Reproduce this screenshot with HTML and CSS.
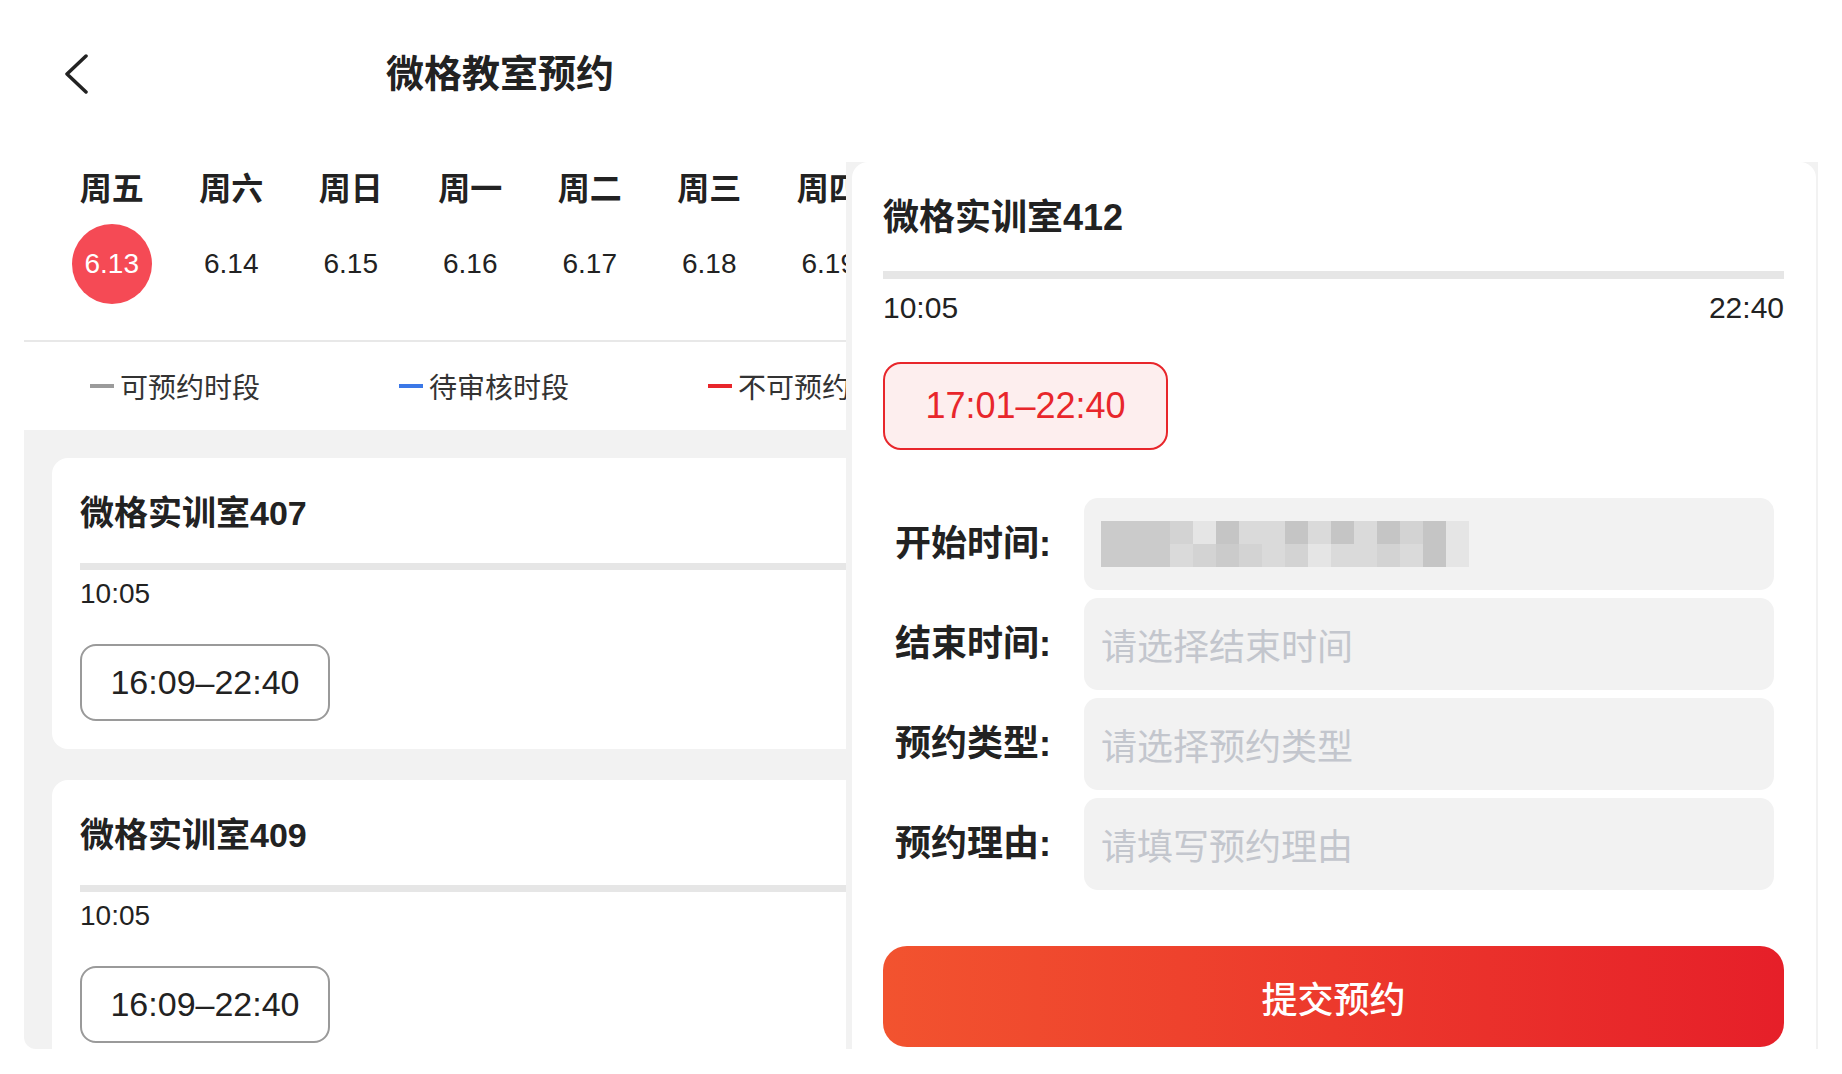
FILE: index.html
```html
<!DOCTYPE html>
<html lang="zh-CN">
<head>
    <meta charset="UTF-8">
    <meta name="viewport" content="width=device-width, initial-scale=1.0">
    <title>微格教室预约</title>
    <link rel="stylesheet" href="styles.css">
</head>
<body>
    <div class="screen">
        <!-- Página de fondo: lista de aulas -->
        <div class="page">
            <header class="nav">
                <a class="nav-back">
                    <svg viewBox="0 0 24 40"><polyline points="22,2 3,20 22,38" /></svg>
                </a>
                <h1 class="nav-title">微格教室预约</h1>
                <span></span>
            </header>

            <ul class="days">
                <li class="day active"><span class="day-week">周五</span><span class="day-date">6.13</span></li>
                <li class="day"><span class="day-week">周六</span><span class="day-date">6.14</span></li>
                <li class="day"><span class="day-week">周日</span><span class="day-date">6.15</span></li>
                <li class="day"><span class="day-week">周一</span><span class="day-date">6.16</span></li>
                <li class="day"><span class="day-week">周二</span><span class="day-date">6.17</span></li>
                <li class="day"><span class="day-week">周三</span><span class="day-date">6.18</span></li>
                <li class="day"><span class="day-week">周四</span><span class="day-date">6.19</span></li>
            </ul>

            <div class="legend">
                <span class="legend-item"><i class="legend-mark free"></i>可预约时段</span>
                <span class="legend-item"><i class="legend-mark pending"></i>待审核时段</span>
                <span class="legend-item"><i class="legend-mark busy"></i>不可预约时段</span>
            </div>

            <div class="rooms">
                <div class="room-card">
                    <div class="room-name">微格实训室407</div>
                    <div class="room-bar"></div>
                    <div class="room-times"><span>10:05</span><span>22:40</span></div>
                    <div class="slot">16:09–22:40</div>
                </div>
                <div class="room-card">
                    <div class="room-name">微格实训室409</div>
                    <div class="room-bar"></div>
                    <div class="room-times"><span>10:05</span><span>22:40</span></div>
                    <div class="slot">16:09–22:40</div>
                </div>
            </div>
        </div>

        <!-- Panel de reserva encima de la página -->
        <div class="sheet">
            <div class="sheet-body">
                <div class="sheet-title">微格实训室412</div>
                <div class="sheet-bar"></div>
                <div class="sheet-times"><span>10:05</span><span>22:40</span></div>
                <div class="slot-picked">17:01–22:40</div>

                <div class="form">
                    <div class="field">
                        <span class="field-label">开始时间:</span>
                        <div class="field-input">
                            <div class="mosaic">
                                <i class="m2"></i><i class="m2"></i><i class="m2"></i><i class="m3"></i><i class="m5"></i><i class="m1"></i><i class="m4"></i><i class="m4"></i>
                                <i class="m1"></i><i class="m4"></i><i class="m1"></i><i class="m4"></i><i class="m1"></i><i class="m3"></i><i class="m1"></i><i class="m5"></i>
                                <i class="m2"></i><i class="m2"></i><i class="m2"></i><i class="m4"></i><i class="m3"></i><i class="m2"></i><i class="m3"></i><i class="m4"></i>
                                <i class="m3"></i><i class="m5"></i><i class="m4"></i><i class="m4"></i><i class="m3"></i><i class="m4"></i><i class="m1"></i><i class="m5"></i>
                            </div>
                        </div>
                    </div>
                    <div class="field">
                        <span class="field-label">结束时间:</span>
                        <div class="field-input">请选择结束时间</div>
                    </div>
                    <div class="field">
                        <span class="field-label">预约类型:</span>
                        <div class="field-input">请选择预约类型</div>
                    </div>
                    <div class="field">
                        <span class="field-label">预约理由:</span>
                        <div class="field-input">请填写预约理由</div>
                    </div>
                </div>

                <button class="submit">提交预约</button>
            </div>
        </div>
    </div>
</body>
</html>
```

FILE: styles.css
```css
/* Estilos generales */
body {
    margin: 0;
    background: #fff;
    color: #222;
    font-family: "Liberation Sans", "Noto Sans CJK SC", sans-serif;
}

.screen {
    position: relative;
    width: 1842px;
    height: 1074px;
    overflow: hidden;
}

/* Página de fondo */
.page {
    width: 952px;
    margin-left: 24px;
}

.nav {
    display: grid;
    grid-template-columns: 1fr auto 1fr;
    align-items: center;
    height: 148px;
}

.nav-back {
    display: flex;
    padding-left: 40px;
}

.nav-back svg {
    width: 24px;
    height: 40px;
    fill: none;
    stroke: #222;
    stroke-width: 3.5;
    stroke-linecap: round;
    stroke-linejoin: round;
}

.nav-title {
    margin: 0;
    font-size: 38px;
    font-weight: 600;
    line-height: 48px;
}

/* Selector de días */
.days {
    list-style: none;
    margin: 0;
    padding: 21px 0 36px 28px;
    display: grid;
    grid-template-columns: repeat(7, 119.5px);
    border-bottom: 2px solid #e8e8e8;
}

.day {
    display: flex;
    flex-direction: column;
    align-items: center;
}

.day-week {
    font-size: 32px;
    font-weight: 600;
    line-height: 40px;
}

.day-date {
    margin-top: 15px;
    width: 80px;
    height: 80px;
    border-radius: 50%;
    font-size: 28px;
    line-height: 80px;
    text-align: center;
}

.day.active .day-date {
    background: #f54a55;
    color: #fff;
}

/* Leyenda */
.legend {
    display: flex;
    align-items: center;
    gap: 139px;
    height: 88px;
    padding-left: 66px;
    font-size: 28px;
    color: #333;
}

.legend-item {
    display: flex;
    align-items: center;
    gap: 6px;
    white-space: nowrap;
}

.legend-mark {
    width: 24px;
    height: 4px;
}

.legend-mark.free { background: #9b9b9b; }
.legend-mark.pending { background: #3b78e7; }
.legend-mark.busy { background: #e8262b; }

/* Tarjetas de aulas */
.rooms {
    box-sizing: border-box;
    height: 619px;
    overflow: hidden;
    padding: 28px 28px 0;
    background: #f2f2f2;
    border-bottom-left-radius: 12px;
    display: flex;
    flex-direction: column;
    gap: 31px;
}

.room-card {
    flex-shrink: 0;
    background: #fff;
    border-radius: 16px;
    padding: 35px 28px 28px;
}

.room-name {
    font-size: 34px;
    font-weight: 600;
    line-height: 40px;
}

.room-bar {
    height: 7px;
    margin-top: 30px;
    background: #e6e6e6;
}

.room-times {
    display: flex;
    justify-content: space-between;
    margin-top: 7px;
    font-size: 28px;
    line-height: 34px;
}

.slot {
    box-sizing: border-box;
    width: 250px;
    height: 77px;
    margin-top: 33px;
    border: 2px solid #9a9a9a;
    border-radius: 16px;
    display: flex;
    align-items: center;
    justify-content: center;
    font-size: 34px;
}

/* Panel de reserva */
.sheet {
    position: absolute;
    left: 846px;
    top: 162px;
    box-sizing: border-box;
    width: 972px;
    height: 887px;
    padding: 0 2px 0 6px;
    background: #f2f2f2;
}

.sheet-body {
    box-sizing: border-box;
    height: 100%;
    padding: 34px 32px 0 31px;
    background: #fff;
    border-radius: 16px 16px 0 0;
    display: flex;
    flex-direction: column;
}

.sheet-title {
    font-size: 36px;
    font-weight: 600;
    line-height: 44px;
}

.sheet-bar {
    height: 8px;
    margin-top: 31px;
    background: #e6e6e6;
}

.sheet-times {
    display: flex;
    justify-content: space-between;
    margin-top: 12px;
    font-size: 30px;
    line-height: 34px;
}

.slot-picked {
    box-sizing: border-box;
    align-self: flex-start;
    width: 285px;
    height: 88px;
    margin-top: 37px;
    border: 2px solid #e8262b;
    border-radius: 18px;
    background: #fdeeee;
    color: #e8262b;
    display: flex;
    align-items: center;
    justify-content: center;
    font-size: 36px;
    font-weight: 500;
}

/* Formulario */
.form {
    margin-top: 48px;
    padding: 0 10px 0 12px;
    display: flex;
    flex-direction: column;
    gap: 8px;
}

.field {
    display: grid;
    grid-template-columns: 189px 1fr;
    align-items: center;
}

.field-label {
    font-size: 36px;
    font-weight: 600;
    line-height: 44px;
}

.field-input {
    height: 92px;
    padding-left: 17px;
    border-radius: 14px;
    background: #f2f2f2;
    display: flex;
    align-items: center;
    font-size: 36px;
    color: #c3c6cd;
}

/* Valor oculto (mosaico) */
.mosaic {
    display: grid;
    grid-template-columns: repeat(16, 23px);
    grid-auto-rows: 23px;
}

.mosaic .m1 { background: #c5c5c5; }
.mosaic .m2 { background: #cbcbcb; }
.mosaic .m3 { background: #d3d3d3; }
.mosaic .m4 { background: #dadada; }
.mosaic .m5 { background: #e5e5e5; }

/* Botón de enviar */
.submit {
    height: 101px;
    margin-top: 56px;
    border: none;
    border-radius: 24px;
    background: linear-gradient(90deg, #f2532f, #e61f29);
    color: #fff;
    font-family: inherit;
    font-size: 36px;
    font-weight: 500;
    cursor: pointer;
}
```
